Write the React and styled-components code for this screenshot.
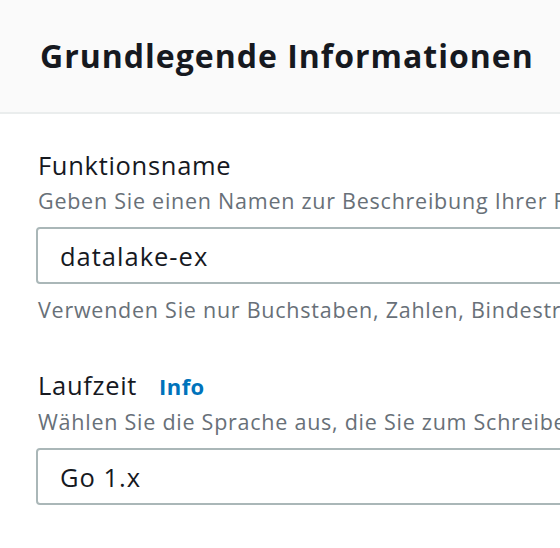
import React from 'react';
import styled, { createGlobalStyle } from 'styled-components';

const GlobalStyle = createGlobalStyle`
html, body {
    margin:0;
    padding:0;
    background:#ffffff;
}
body{
    font-family:"Open Sans", "Noto Sans", Arial, sans-serif;
    color:#16191f;
    overflow:hidden;
}
`

const Panel = styled.div`
width:560px;
height:548px;
overflow:hidden;
background:#ffffff;
`

const Header = styled.div`
height:114px;
box-sizing:border-box;
background:#fafafa;
border-bottom:2px solid #eaeded;
display:flex;
align-items:center;
padding:0 0 2px 40px;
h2{
    margin:0;
    font-size:32px;
    font-weight:700;
    letter-spacing:1px;
    white-space:nowrap;
    color:#16191f;
}
`

const Body = styled.div`
width:1000px;
padding:34px 0 0 38px;
display:flex;
flex-direction:column;
gap:43px;
`

const Field = styled.div`
display:flex;
flex-direction:column;
`

const Label = styled.div`
font-size:25.5px;
line-height:34px;
letter-spacing:0.7px;
white-space:nowrap;
display:flex;
align-items:baseline;
gap:22px;
color:#16191f;
`

const InfoLink = styled.a`
font-size:22px;
font-weight:700;
letter-spacing:0.4px;
color:#0073bb;
text-decoration:none;
`

const Description = styled.div`
margin-top:4px;
font-size:21.5px;
line-height:30px;
letter-spacing:0.75px;
color:#687078;
white-space:nowrap;
`

const Constraint = styled(Description)`
margin-top:11px;
`

const Box = styled.div`
margin-top:11px;
margin-left:-2px;
height:57px;
box-sizing:border-box;
border:2px solid #aab7b8;
border-radius:4px;
display:flex;
align-items:center;
padding:0 0 0 22px;
font-size:25.5px;
letter-spacing:1px;
color:#16191f;
`

const App = () => {
    return (
        <Panel>
            <GlobalStyle/>
            <Header>
                <h2>Grundlegende Informationen</h2>
            </Header>
            <Body>
                <Field>
                    <Label>Funktionsname</Label>
                    <Description>Geben Sie einen Namen zur Beschreibung Ihrer Funktion ein.</Description>
                    <Box>datalake-ex</Box>
                    <Constraint>Verwenden Sie nur Buchstaben, Zahlen, Bindestriche oder Unterstriche ohne Leerzeichen.</Constraint>
                </Field>
                <Field>
                    <Label>Laufzeit<InfoLink href="#">Info</InfoLink></Label>
                    <Description>Wählen Sie die Sprache aus, die Sie zum Schreiben Ihrer Funktion verwenden möchten.</Description>
                    <Box>Go 1.x</Box>
                </Field>
            </Body>
        </Panel>
    )
};
export default App
